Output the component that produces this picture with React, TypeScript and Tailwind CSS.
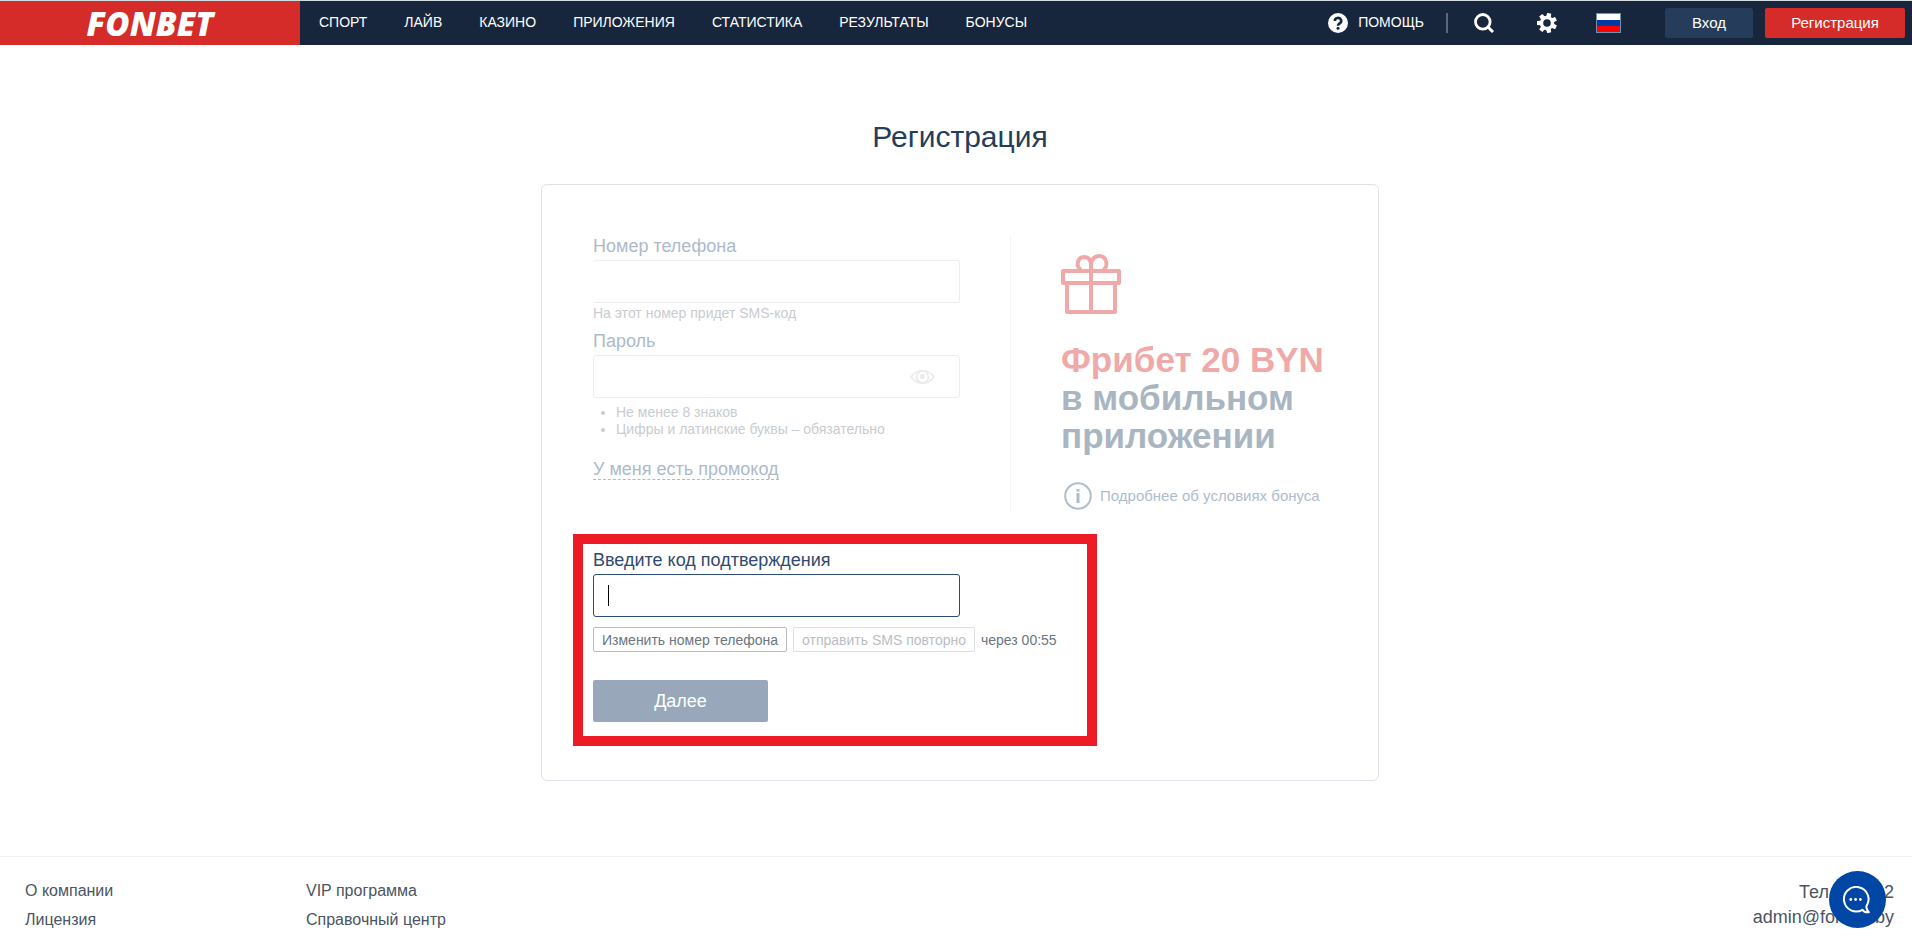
import React from "react";

const nav = ["СПОРТ", "ЛАЙВ", "КАЗИНО", "ПРИЛОЖЕНИЯ", "СТАТИСТИКА", "РЕЗУЛЬТАТЫ", "БОНУСЫ"];

function Header() {
  return (
    <header className="flex h-[45px] items-stretch border-t border-[#d3dcdf] bg-[#18263d] text-sm text-white">
      <a href="#" aria-label="FONBET" className="flex w-[300px] items-center justify-center bg-[#d52b29]">
        <span className="font-['Open_Sans',sans-serif] text-[33px] leading-none font-extrabold italic">FONBET</span>
      </a>
      <nav className="flex items-center gap-[37px] pb-[2px] pl-[19px]">
        {nav.map((n) => (
          <a key={n} href="#">{n}</a>
        ))}
      </nav>
      <div className="ml-auto flex items-center pr-[7px]">
        <a href="#" className="flex items-center gap-[10px]">
          <svg width="20" height="20" viewBox="0 0 20 20" aria-hidden="true">
            <circle cx="10" cy="10" r="10" fill="#fff" />
            <path d="M6.800 8a3.200 3 0 1 1 4.800 2.500c-1 .7-1.600 1-1.600 2.200" fill="none" stroke="#18263d" strokeWidth="2.600" />
            <circle cx="10" cy="15.200" r="1.500" fill="#18263d" />
          </svg>
          <span className="pb-[2px]">ПОМОЩЬ</span>
        </a>
        <span className="ml-[22px] h-5 w-[2px] bg-[#5d6777]" />
        <button aria-label="Поиск" className="ml-[26px]">
          <svg width="20" height="20" viewBox="0 0 20 20" fill="none" stroke="#fff" strokeWidth="2.800" aria-hidden="true">
            <circle cx="8.800" cy="8.800" r="7.300" />
            <path d="M13.500 13.500 19 19" strokeWidth="3" />
          </svg>
        </button>
        <button aria-label="Настройки" className="ml-[43px]">
          <svg width="20" height="20" viewBox="0 0 20 20" aria-hidden="true">
            <g fill="#fff">
              <circle cx="10" cy="10" r="7.200" />
              {[13, 64.4, 115.8, 167.2, 218.6, 270, 321.4].map((a) => (
                <path key={a} d="M7.400 6 8 0h4l.6 6z" transform={`rotate(${a} 10 10)`} />
              ))}
            </g>
            <circle cx="10" cy="10" r="3.800" fill="#18263d" />
          </svg>
        </button>
        <button aria-label="Русский" className="ml-[39px] flex h-[20px] w-[25px] flex-col border border-[#6e93b3]">
          <span className="w-full flex-1 bg-white" />
          <span className="w-full flex-1 bg-[#0039a6]" />
          <span className="w-full flex-1 bg-[#f00]" />
        </button>
        <button className="ml-11 h-[30px] w-[88px] rounded-[2px] bg-[#253d5b] text-[15px]">Вход</button>
        <button className="ml-3 h-[30px] w-[140px] rounded-[2px] bg-[#d52b29] text-[15px]">Регистрация</button>
      </div>
    </header>
  );
}

function Gift() {
  return (
    <svg width="60" height="60" viewBox="0 0 60 60" fill="none" stroke="#efa9a9" strokeWidth="4" strokeLinejoin="round" aria-hidden="true">
      <rect x="2" y="17" width="56" height="12" />
      <path d="M6 29v29h48V29M30 5v53" />
      <path d="M20 16C14 12 17 3 23 3c5 0 7 4 7 8" />
      <path d="M30 11c0-6 4-9 8-9 8 0 10 11 4 14" />
    </svg>
  );
}

function InfoIcon() {
  return (
    <svg width="28" height="28" viewBox="0 0 28 28" fill="none" stroke="#aebdcd" aria-hidden="true">
      <circle cx="14" cy="14" r="12.800" strokeWidth="2" />
      <path d="M14 11v10M14 7v2.500" strokeWidth="3" />
    </svg>
  );
}

const field = "block h-[43px] w-full rounded-[3px] border border-[#ededed] px-[14px] text-lg outline-none";

export default function App() {
  return (
    <div className="min-h-screen bg-white font-['Liberation_Sans',Arial,sans-serif] text-sm">
      <Header />
      <main className="pt-[74px] pb-[75px] pl-2">
        <h1 className="text-center text-[30px] leading-[36px] text-[#253d5b]">Регистрация</h1>
        <form className="mx-auto mt-[29px] max-w-[838px] rounded-md border border-[#dfe2e9] px-[31px] pt-[50px] pb-[34px]">
          <div className="flex pl-5">
            <div className="h-[277px] w-[418px] border-r border-[#f3f4f5] pr-[50px] text-[#c9ccd1]">
              <label htmlFor="phone" className="block h-[25px] text-lg leading-[22px] text-[#aebaca]">Номер телефона</label>
              <input id="phone" type="tel" className={`${field} border-l-0`} />
              <p className="leading-[20px]">На этот номер придет SMS-код</p>
              <label htmlFor="pass" className="mt-[7px] block h-[25px] text-lg leading-[22px] text-[#aebaca]">Пароль</label>
              <div className="relative">
                <input id="pass" type="password" className={field} />
                <button type="button" aria-label="Показать пароль" className="absolute top-[14px] right-[25px]">
                  <svg width="25" height="16" viewBox="0 0 25 16" fill="none" stroke="#ececee" strokeWidth="1.800" aria-hidden="true">
                    <path d="M1 8c6-8.500 17-8.500 23 0-6 8.500-17 8.500-23 0Z" />
                    <circle cx="12.500" cy="8" r="5.800" />
                    <circle cx="12.500" cy="7.500" r="1.800" fill="#ececee" />
                  </svg>
                </button>
              </div>
              <ul className="mt-[6px] list-disc pl-[23px] leading-[17px]">
                <li>Не менее 8 знаков</li>
                <li>Цифры и латинские буквы – обязательно</li>
              </ul>
              <a href="#" className="mt-[21px] inline-block border-b border-dashed border-[#aebaca] text-lg leading-[20px] text-[#aebaca]">У меня есть промокод</a>
            </div>
            <div className="pt-[19px] pl-[50px]">
              <Gift />
              <h2 className="mt-[27px] text-[35px] leading-[38px] font-bold text-[#a9b6c2]">
                <span className="text-[#efa9a9]">Фрибет 20 BYN</span>
                <br />в мобильном
                <br />приложении
              </h2>
              <a href="#" className="mt-[27px] ml-[3px] flex items-center gap-2 text-[15px] text-[#aebdcd]">
                <InfoIcon />
                Подробнее об условиях бонуса
              </a>
            </div>
          </div>
          <section className="mt-[22px] max-w-[524px] border-10 border-[#ed1c24] px-[10px] pt-[5px] pb-[14px]">
            <label htmlFor="code" className="block h-[25px] text-lg leading-[22px] text-[#2f4a70]">Введите код подтверждения</label>
            <div className="flex h-[43px] w-[367px] items-center rounded-[3px] border border-[#2a4a78] pl-[14px]">
              <span className="h-[21px] w-px bg-black" />
              <input id="code" type="text" className="h-full min-w-0 flex-1 text-lg outline-none" />
            </div>
            <div className="mt-[10px] flex items-center gap-[6px] whitespace-nowrap text-[#6b7680]">
              <button type="button" className="h-[25px] rounded-[2px] border border-[#b9bcc2] px-2">Изменить номер телефона</button>
              <button type="button" className="h-[25px] rounded-[2px] border border-[#dcdee0] px-2 text-[#b9bec4]">отправить SMS повторно</button>
              <span>через 00:55</span>
            </div>
            <button type="button" className="mt-[28px] block h-[42px] w-[175px] rounded-[2px] bg-[#98a8ba] text-lg text-white">Далее</button>
          </section>
        </form>
      </main>
      <footer className="relative flex justify-between border-t border-[#f0f1f2] pt-[19px] pr-[18px] pl-[25px] text-[#4b5563]">
        <div className="flex text-base leading-[29px]">
          <div className="flex w-[281px] flex-col items-start">
            <a href="#">О компании</a>
            <a href="#">Лицензия</a>
          </div>
          <div className="flex flex-col items-start">
            <a href="#">VIP программа</a>
            <a href="#">Справочный центр</a>
          </div>
        </div>
        <div className="pt-1 text-right text-lg leading-[25px]">
          <p>Тел.: 75222</p>
          <a href="#">admin@fonbet.by</a>
        </div>
        <button aria-label="Чат" className="absolute top-[14px] right-[26px] flex size-[57px] items-center justify-center rounded-full bg-[#0046a5]">
          <svg width="32" height="28" viewBox="0 0 32 28" fill="none" stroke="#fff" strokeWidth="2" strokeLinejoin="round" aria-hidden="true">
            <path d="M20.500 23.800A12.300 12.300 0 1 1 24.500 20c-.4 2.500.5 4.500 2.300 6.200-2.300.4-5 0-6.300-2.400Z" />
            <g fill="#fff" stroke="none">
              <circle cx="8.800" cy="13.500" r="1.400" />
              <circle cx="13.600" cy="13.500" r="1.400" />
              <circle cx="18.400" cy="13.500" r="1.400" />
            </g>
          </svg>
        </button>
      </footer>
    </div>
  );
}
